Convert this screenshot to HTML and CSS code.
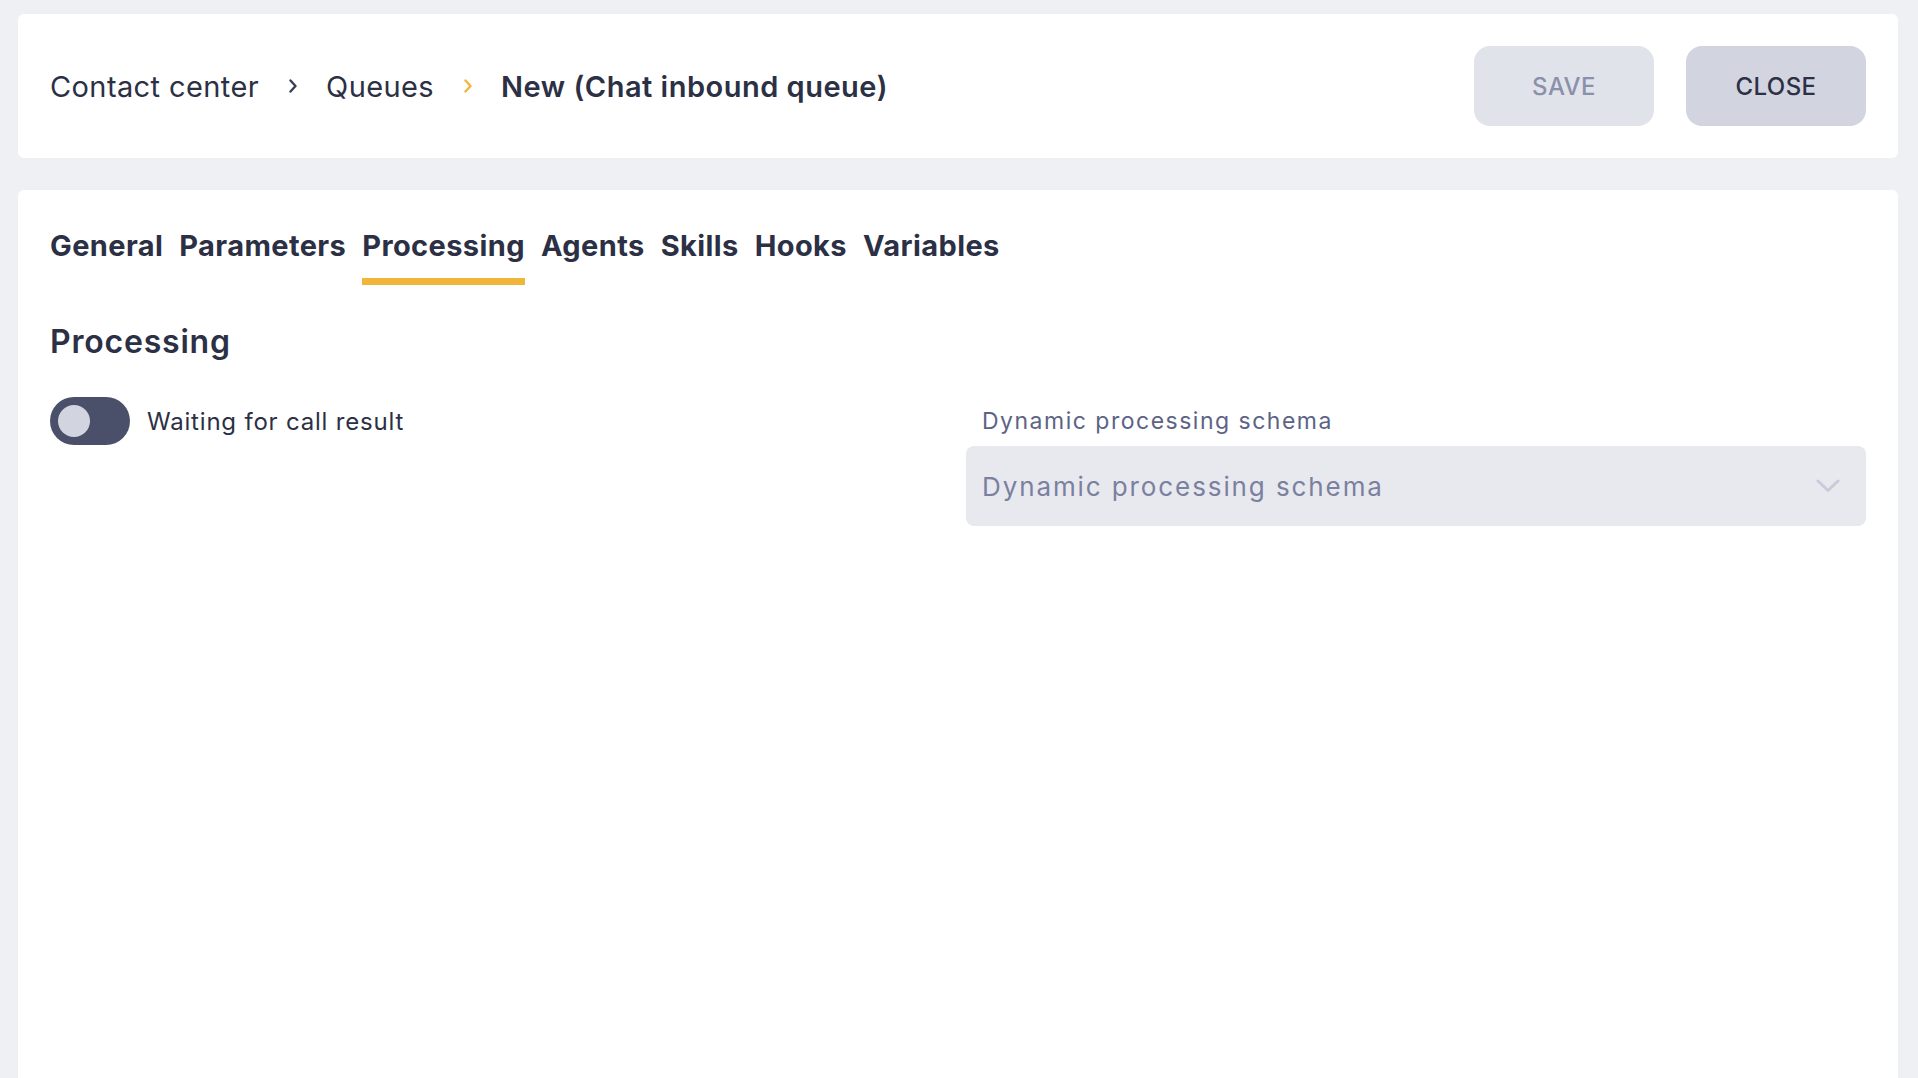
FILE: index.html
```html
<!DOCTYPE html>
<html lang="en">
<head>
  <meta charset="UTF-8">
  <meta name="viewport" content="width=device-width, initial-scale=1.0">
  <title>New (Chat inbound queue)</title>
  <link rel="stylesheet" href="styles.css">
</head>
<body>
  <header class="top-card">
    <nav class="breadcrumbs">
      <span class="crumb">Contact center</span>
      <svg class="crumb-sep" width="8" height="14" viewBox="0 0 8 14"><path d="M1.5 1.5 L6.5 7 L1.5 12.5" /></svg>
      <span class="crumb">Queues</span>
      <svg class="crumb-sep current" width="8" height="14" viewBox="0 0 8 14"><path d="M1.5 1.5 L6.5 7 L1.5 12.5" /></svg>
      <span class="crumb current">New (Chat inbound queue)</span>
    </nav>
    <div class="actions">
      <button class="btn btn-save" disabled>SAVE</button>
      <button class="btn btn-close">CLOSE</button>
    </div>
  </header>

  <main class="main-card">
    <div class="tabs">
      <button class="tab">General</button>
      <button class="tab">Parameters</button>
      <button class="tab active">Processing</button>
      <button class="tab">Agents</button>
      <button class="tab">Skills</button>
      <button class="tab">Hooks</button>
      <button class="tab">Variables</button>
    </div>

    <h2 class="section-title">Processing</h2>

    <div class="form-grid">
      <div class="field switch-field">
        <label class="switch">
          <input type="checkbox">
          <span class="track"><span class="knob"></span></span>
        </label>
        <span class="switch-label">Waiting for call result</span>
      </div>
      <div class="field">
        <div class="field-label">Dynamic processing schema</div>
        <div class="select">
          <span class="placeholder">Dynamic processing schema</span>
          <svg class="select-arrow" width="24" height="14" viewBox="0 0 24 14"><path d="M2 2 L12 11.5 L22 2" /></svg>
        </div>
      </div>
    </div>
  </main>
</body>
</html>
```
FILE: styles.css
```css
html, body {
  height: 100%;
}
body {
  margin: 0;
  padding: 14px 20px 0 18px;
  box-sizing: border-box;
  background-color: #eff0f4;
  font-family: Inter, "Noto Sans", sans-serif;
  color: #2c3045;
  overflow: hidden;
}
.top-card {
  display: flex;
  align-items: center;
  justify-content: space-between;
  height: 144px;
  box-sizing: border-box;
  padding: 0 32px;
  background-color: #fff;
  border-radius: 6px;
}
.breadcrumbs {
  display: flex;
  align-items: center;
  font-size: 29px;
  letter-spacing: 0.4px;
}
.crumb {
  color: #2c3045;
}
.crumb.current {
  font-weight: 600;
  letter-spacing: 0.5px;
}
.crumb-sep {
  margin: 0 29px 0 30px;
  fill: none;
  stroke: #3a3f55;
  stroke-width: 2.4;
  stroke-linecap: round;
  stroke-linejoin: round;
}
.crumb-sep.current {
  stroke: #f0b63a;
}
.actions {
  display: flex;
  gap: 32px;
}
.btn {
  width: 180px;
  height: 80px;
  border: none;
  border-radius: 16px;
  font-family: inherit;
  font-size: 24px;
  font-weight: 500;
  letter-spacing: 0.4px;
  cursor: pointer;
}
.btn-save {
  background-color: #e1e3ea;
  color: #8a90aa;
  cursor: default;
}
.btn-close {
  background-color: #d2d4df;
  color: #2c3045;
}
.main-card {
  margin-top: 32px;
  min-height: 888px;
  box-sizing: border-box;
  padding: 38px 32px 0;
  background-color: #fff;
  border-radius: 6px 6px 0 0;
}
.tabs {
  display: flex;
  gap: 16px;
}
.tab {
  padding: 0 0 14px;
  border: none;
  border-bottom: 7px solid transparent;
  background: none;
  font-family: inherit;
  font-size: 29px;
  font-weight: 700;
  letter-spacing: 0.4px;
  line-height: 36px;
  color: #2c3045;
  cursor: pointer;
}
.tab.active {
  border-bottom-color: #f0b63a;
}
.section-title {
  margin: 39px 0 37px;
  font-size: 32px;
  font-weight: 600;
  letter-spacing: 0.8px;
  line-height: 36px;
}
.form-grid {
  display: grid;
  grid-template-columns: 1fr 1fr;
  gap: 16px;
}
.switch-field {
  display: flex;
  align-items: center;
  align-self: start;
  height: 48px;
  gap: 17px;
}
.switch input {
  display: none;
}
.track {
  display: flex;
  align-items: center;
  width: 80px;
  height: 48px;
  padding: 0 8px;
  box-sizing: border-box;
  border-radius: 24px;
  background-color: #4a5069;
  cursor: pointer;
}
.knob {
  width: 32px;
  height: 32px;
  border-radius: 50%;
  background-color: #d2d4e0;
}
.switch-label {
  font-size: 24px;
  letter-spacing: 0.8px;
}
.field-label {
  padding-left: 16px;
  height: 49px;
  line-height: 49px;
  font-size: 23px;
  letter-spacing: 1.5px;
  color: #5d6384;
}
.select {
  display: flex;
  align-items: center;
  justify-content: space-between;
  height: 80px;
  padding: 0 26px 0 16px;
  border-radius: 8px;
  background-color: #e8e9ef;
}
.placeholder {
  font-size: 26px;
  letter-spacing: 1.9px;
  color: #7a809e;
}
.select-arrow {
  fill: none;
  stroke: #c9cbd9;
  stroke-width: 3;
  stroke-linecap: round;
  stroke-linejoin: round;
}
```
